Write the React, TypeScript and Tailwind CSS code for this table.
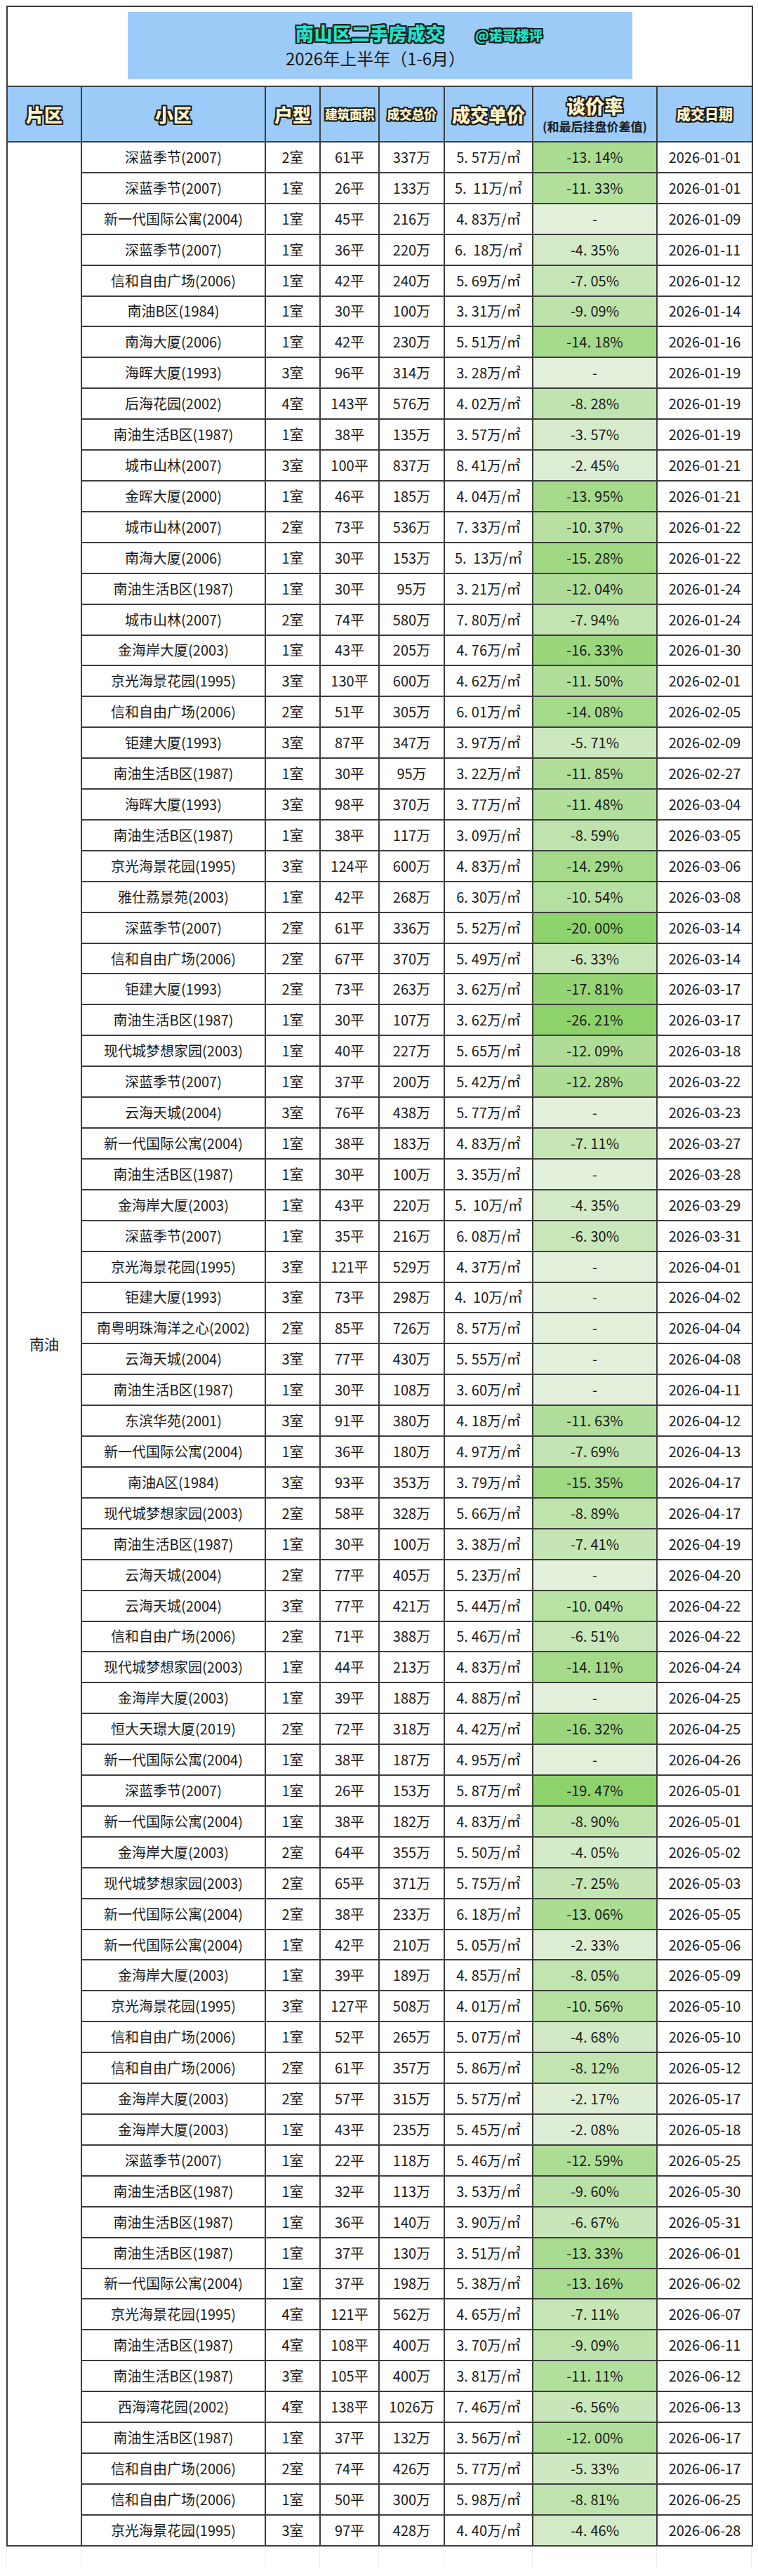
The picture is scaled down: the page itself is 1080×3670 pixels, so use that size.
import React from "react";

const RAW = `深蓝季节(2007)|2室|61平|337万|5.57|-13.14%|2026-01-01
深蓝季节(2007)|1室|26平|133万|5. 11|-11.33%|2026-01-01
新一代国际公寓(2004)|1室|45平|216万|4.83|-|2026-01-09
深蓝季节(2007)|1室|36平|220万|6. 18|-4.35%|2026-01-11
信和自由广场(2006)|1室|42平|240万|5.69|-7.05%|2026-01-12
南油B区(1984)|1室|30平|100万|3.31|-9.09%|2026-01-14
南海大厦(2006)|1室|42平|230万|5.51|-14.18%|2026-01-16
海晖大厦(1993)|3室|96平|314万|3.28|-|2026-01-19
后海花园(2002)|4室|143平|576万|4.02|-8.28%|2026-01-19
南油生活B区(1987)|1室|38平|135万|3.57|-3.57%|2026-01-19
城市山林(2007)|3室|100平|837万|8.41|-2.45%|2026-01-21
金晖大厦(2000)|1室|46平|185万|4.04|-13.95%|2026-01-21
城市山林(2007)|2室|73平|536万|7.33|-10.37%|2026-01-22
南海大厦(2006)|1室|30平|153万|5. 13|-15.28%|2026-01-22
南油生活B区(1987)|1室|30平|95万|3.21|-12.04%|2026-01-24
城市山林(2007)|2室|74平|580万|7.80|-7.94%|2026-01-24
金海岸大厦(2003)|1室|43平|205万|4.76|-16.33%|2026-01-30
京光海景花园(1995)|3室|130平|600万|4.62|-11.50%|2026-02-01
信和自由广场(2006)|2室|51平|305万|6.01|-14.08%|2026-02-05
钜建大厦(1993)|3室|87平|347万|3.97|-5.71%|2026-02-09
南油生活B区(1987)|1室|30平|95万|3.22|-11.85%|2026-02-27
海晖大厦(1993)|3室|98平|370万|3.77|-11.48%|2026-03-04
南油生活B区(1987)|1室|38平|117万|3.09|-8.59%|2026-03-05
京光海景花园(1995)|3室|124平|600万|4.83|-14.29%|2026-03-06
雅仕荔景苑(2003)|1室|42平|268万|6.30|-10.54%|2026-03-08
深蓝季节(2007)|2室|61平|336万|5.52|-20.00%|2026-03-14
信和自由广场(2006)|2室|67平|370万|5.49|-6.33%|2026-03-14
钜建大厦(1993)|2室|73平|263万|3.62|-17.81%|2026-03-17
南油生活B区(1987)|1室|30平|107万|3.62|-26.21%|2026-03-17
现代城梦想家园(2003)|1室|40平|227万|5.65|-12.09%|2026-03-18
深蓝季节(2007)|1室|37平|200万|5.42|-12.28%|2026-03-22
云海天城(2004)|3室|76平|438万|5.77|-|2026-03-23
新一代国际公寓(2004)|1室|38平|183万|4.83|-7.11%|2026-03-27
南油生活B区(1987)|1室|30平|100万|3.35|-|2026-03-28
金海岸大厦(2003)|1室|43平|220万|5. 10|-4.35%|2026-03-29
深蓝季节(2007)|1室|35平|216万|6.08|-6.30%|2026-03-31
京光海景花园(1995)|3室|121平|529万|4.37|-|2026-04-01
钜建大厦(1993)|3室|73平|298万|4. 10|-|2026-04-02
南粤明珠海洋之心(2002)|2室|85平|726万|8.57|-|2026-04-04
云海天城(2004)|3室|77平|430万|5.55|-|2026-04-08
南油生活B区(1987)|1室|30平|108万|3.60|-|2026-04-11
东滨华苑(2001)|3室|91平|380万|4.18|-11.63%|2026-04-12
新一代国际公寓(2004)|1室|36平|180万|4.97|-7.69%|2026-04-13
南油A区(1984)|3室|93平|353万|3.79|-15.35%|2026-04-17
现代城梦想家园(2003)|2室|58平|328万|5.66|-8.89%|2026-04-17
南油生活B区(1987)|1室|30平|100万|3.38|-7.41%|2026-04-19
云海天城(2004)|2室|77平|405万|5.23|-|2026-04-20
云海天城(2004)|3室|77平|421万|5.44|-10.04%|2026-04-22
信和自由广场(2006)|2室|71平|388万|5.46|-6.51%|2026-04-22
现代城梦想家园(2003)|1室|44平|213万|4.83|-14.11%|2026-04-24
金海岸大厦(2003)|1室|39平|188万|4.88|-|2026-04-25
恒大天璟大厦(2019)|2室|72平|318万|4.42|-16.32%|2026-04-25
新一代国际公寓(2004)|1室|38平|187万|4.95|-|2026-04-26
深蓝季节(2007)|1室|26平|153万|5.87|-19.47%|2026-05-01
新一代国际公寓(2004)|1室|38平|182万|4.83|-8.90%|2026-05-01
金海岸大厦(2003)|2室|64平|355万|5.50|-4.05%|2026-05-02
现代城梦想家园(2003)|2室|65平|371万|5.75|-7.25%|2026-05-03
新一代国际公寓(2004)|2室|38平|233万|6.18|-13.06%|2026-05-05
新一代国际公寓(2004)|1室|42平|210万|5.05|-2.33%|2026-05-06
金海岸大厦(2003)|1室|39平|189万|4.85|-8.05%|2026-05-09
京光海景花园(1995)|3室|127平|508万|4.01|-10.56%|2026-05-10
信和自由广场(2006)|1室|52平|265万|5.07|-4.68%|2026-05-10
信和自由广场(2006)|2室|61平|357万|5.86|-8.12%|2026-05-12
金海岸大厦(2003)|2室|57平|315万|5.57|-2.17%|2026-05-17
金海岸大厦(2003)|1室|43平|235万|5.45|-2.08%|2026-05-18
深蓝季节(2007)|1室|22平|118万|5.46|-12.59%|2026-05-25
南油生活B区(1987)|1室|32平|113万|3.53|-9.60%|2026-05-30
南油生活B区(1987)|1室|36平|140万|3.90|-6.67%|2026-05-31
南油生活B区(1987)|1室|37平|130万|3.51|-13.33%|2026-06-01
新一代国际公寓(2004)|1室|37平|198万|5.38|-13.16%|2026-06-02
京光海景花园(1995)|4室|121平|562万|4.65|-7.11%|2026-06-07
南油生活B区(1987)|4室|108平|400万|3.70|-9.09%|2026-06-11
南油生活B区(1987)|3室|105平|400万|3.81|-11.11%|2026-06-12
西海湾花园(2002)|4室|138平|1026万|7.46|-6.56%|2026-06-13
南油生活B区(1987)|1室|37平|132万|3.56|-12.00%|2026-06-17
信和自由广场(2006)|2室|74平|426万|5.77|-5.33%|2026-06-17
信和自由广场(2006)|1室|50平|300万|5.98|-8.81%|2026-06-25
京光海景花园(1995)|3室|97平|428万|4.40|-4.46%|2026-06-28`;

const ROWS = RAW.split("\n").map((l) => l.split("|"));

const OUTLINE =
  "[text-shadow:2px_0_0_#1c1c1c,-2px_0_0_#1c1c1c,0_2px_0_#1c1c1c,0_-2px_0_#1c1c1c,2px_2px_0_#1c1c1c,-2px_-2px_0_#1c1c1c,2px_-2px_0_#1c1c1c,-2px_2px_0_#1c1c1c]";

const B = "border-2 border-[#3d3d3d]";

function Num({ s }: { s: string }) {
  const i = s.indexOf(".");
  if (i < 0) return <>{s}</>;
  return (
    <>
      {s.slice(0, i)}
      <span className="mr-[5px]">.</span>
      {s.slice(i + 1)}
    </>
  );
}

function rateBg(r: string): string {
  if (r === "-") return "rgb(227,240,220)";
  const v = Math.abs(parseFloat(r));
  let t = (v - 2) / 17;
  t = Math.max(0, Math.min(1, t));
  const a = [222, 238, 214];
  const b = [142, 210, 108];
  const c = a.map((x, k) => Math.round(x + (b[k] - x) * t));
  return `rgb(${c[0]},${c[1]},${c[2]})`;
}

function HeadCell({ children, className = "" }: { children: React.ReactNode; className?: string }) {
  return (
    <th className={`${B} bg-[#9dcbf7] p-0 text-center align-middle font-black text-[#fff3c6] ${OUTLINE} ${className}`}>
      {children}
    </th>
  );
}

export default function App() {
  return (
    <div className="min-h-[3670px] w-[1080px] bg-white pl-[9px] pt-[8px] text-[#1a1a1a] [font-family:'Noto_Sans_CJK_SC','Noto_Sans',sans-serif]">
      <table className="w-[1062px] table-fixed border-collapse">
        <colgroup>
          <col className="w-[106px]" />
          <col className="w-[262px]" />
          <col className="w-[78px]" />
          <col className="w-[84px]" />
          <col className="w-[93px]" />
          <col className="w-[126px]" />
          <col className="w-[177px]" />
          <col className="w-[136px]" />
        </colgroup>
        <thead>
          <tr>
            <td colSpan={8} className={`${B} h-[114px] p-0 align-top`}>
              <div className="mx-auto mt-[7px] flex h-[96px] w-[719px] flex-col items-center justify-center bg-[#9dcbf7] pr-[12px]">
                <div className="grid w-full grid-cols-[1fr_auto_1fr] items-end pr-[16px]">
                  <div />
                  <div className={`text-[26px] leading-[30px] font-black tracking-[0.5px] text-[#22e2cc] ${OUTLINE}`}>
                    南山区二手房成交
                  </div>
                  <div className={`pl-[44px] text-[19px] leading-[24px] font-black text-[#22e2cc] ${OUTLINE}`}>
                    @诺哥楼评
                  </div>
                </div>
                <div className="mt-[6px] text-[24px] leading-[30px] text-[#1a1a1a]">2026年上半年（1-6月）</div>
              </div>
            </td>
          </tr>
          <tr className="h-[79px]">
            <HeadCell className="text-[26px]">片区</HeadCell>
            <HeadCell className="text-[26px]">小区</HeadCell>
            <HeadCell className="text-[26px]">户型</HeadCell>
            <HeadCell className="text-[18px] tracking-[-0.5px]">建筑面积</HeadCell>
            <HeadCell className="text-[18px] tracking-[-0.5px]">成交总价</HeadCell>
            <HeadCell className="text-[26px]">成交单价</HeadCell>
            <th className={`${B} bg-[#9dcbf7] p-0 text-center align-middle`}>
              <div className={`text-[27px] leading-[32px] font-black text-[#fff3c6] ${OUTLINE}`}>谈价率</div>
              <div className="mt-[2px] text-[17px] leading-[22px] font-bold text-[#1a1a1a]">(和最后挂盘价差值)</div>
            </th>
            <HeadCell className="text-[20px]">成交日期</HeadCell>
          </tr>
        </thead>
        <tbody>
          {ROWS.map((r, i) => (
            <tr key={i} className="h-[43.92px]">
              {i === 0 && (
                <td rowSpan={ROWS.length} className={`${B} p-0 text-center align-middle text-[21px]`}>
                  南油
                </td>
              )}
              <td className={`${B} p-0 text-center align-middle text-[20px] leading-[26px]`}>{r[0]}</td>
              <td className={`${B} p-0 text-center align-middle text-[20px] leading-[26px]`}>{r[1]}</td>
              <td className={`${B} p-0 text-center align-middle text-[20px] leading-[26px]`}>{r[2]}</td>
              <td className={`${B} p-0 text-center align-middle text-[20px] leading-[26px]`}>{r[3]}</td>
              <td className={`${B} p-0 text-center align-middle text-[20px] leading-[26px] whitespace-pre`}>
                <Num s={r[4]} />万/㎡
              </td>
              <td
                className={`${B} p-0 text-center align-middle text-[20px] leading-[26px]`}
                style={{ backgroundColor: rateBg(r[5]) }}
              >
                <Num s={r[5]} />
              </td>
              <td className={`${B} p-0 text-center align-middle text-[20px] leading-[26px]`}>{r[6]}</td>
            </tr>
          ))}
        </tbody>
      </table>
      <div className="flex h-[30px] w-[1062px]">
        <div className="w-[106px] border-l border-[#ececec]" />
        <div className="w-[262px] border-l border-[#ececec]" />
        <div className="w-[78px] border-l border-[#ececec]" />
        <div className="w-[84px] border-l border-[#ececec]" />
        <div className="w-[93px] border-l border-[#ececec]" />
        <div className="w-[126px] border-l border-[#ececec]" />
        <div className="w-[177px] border-l border-[#ececec]" />
        <div className="w-[136px] border-x border-[#ececec]" />
      </div>
    </div>
  );
}
